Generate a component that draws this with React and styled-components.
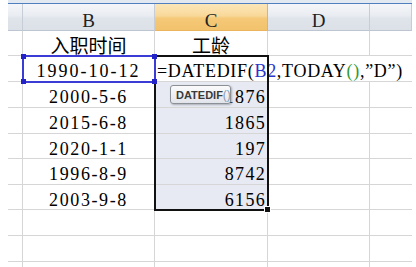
import React from 'react';
import styled, { createGlobalStyle } from 'styled-components';

const GlobalStyle = createGlobalStyle`
  html, body {
    margin: 0;
    padding: 0;
    background: #fff;
    overflow: hidden;
  }
`;

const COLS = '15px 132px 113px 102px 42px';
const GRID = '#d6d6d6';

const Sheet = styled.div`
  position: relative;
  margin-left: 8px;
  width: 404px;
  height: 267px;
  overflow: hidden;
  font-family: "Liberation Serif", "Noto Sans CJK SC", serif;
  font-size: 18px;
  color: #000;
`;

const TopStrip = styled.div`
  height: 3px;
  background: #e3e9f1;
  border-bottom: 1px solid #4f7fbf;
`;

const Row = styled.div`
  display: grid;
  grid-template-columns: ${COLS};
  height: ${p => p.h}px;
`;

const HeadCell = styled.div`
  box-sizing: border-box;
  display: flex;
  align-items: center;
  justify-content: center;
  padding-top: 6px;
  line-height: 1;
  font-size: 19px;
  color: #222;
  background: ${p => p.active
    ? 'linear-gradient(#fbe6b8, #f9d99a 45%, #f5c978 55%, #f2c26c)'
    : 'linear-gradient(#f4f6f9, #e9ecf1 45%, #dfe4eb 55%, #dce1e8)'};
  border-right: 1px solid ${p => (p.active ? '#e2b268' : '#c6cdd7')};
  border-bottom: 1px solid ${p => (p.active ? '#eab55e' : '#bcc5d1')};
`;

const Cell = styled.div`
  box-sizing: border-box;
  position: relative;
  display: flex;
  align-items: center;
  justify-content: ${p => (p.align === 'right' ? 'flex-end' : p.align === 'left' ? 'flex-start' : 'center')};
  padding-top: ${p => (p.cjk ? '2px' : '5px')};
  padding-right: ${p => (p.align === 'right' ? '1px' : '0')};
  padding-left: ${p => (p.align === 'left' ? '2px' : '0')};
  font-family: ${p => (p.cjk ? '"Noto Sans CJK SC", sans-serif' : '"Liberation Serif", serif')};
  font-size: ${p => (p.cjk ? '19px' : '18px')};
  letter-spacing: ${p => p.ls || 0}px;
  line-height: 1;
  white-space: nowrap;
  background: ${p => (p.sel ? '#e7e9f3' : p.open ? 'transparent' : '#fff')};
  border-right: ${p => (p.open ? 'none' : `1px solid ${GRID}`)};
  border-bottom: 1px solid ${GRID};
  z-index: ${p => (p.front ? 1 : 0)};
`;

const Ref = styled.span`
  color: #2a35c9;
`;

const Paren = styled.span`
  color: #2f9a35;
`;

const RefBox = styled.div`
  position: absolute;
  left: 14px;
  top: 55px;
  width: 134px;
  height: 28px;
  box-sizing: border-box;
  border: 2px solid #3b3bd6;
  z-index: 3;
`;

const Knob = styled.div`
  position: absolute;
  width: 5px;
  height: 5px;
  background: #2323c8;
  left: ${p => (p.r ? 'auto' : '-3px')};
  right: ${p => (p.r ? '-3px' : 'auto')};
  top: ${p => (p.b ? 'auto' : '-3px')};
  bottom: ${p => (p.b ? '-3px' : 'auto')};
`;

const Range = styled.div`
  position: absolute;
  left: 146px;
  top: 55px;
  width: 115px;
  height: 156px;
  box-sizing: border-box;
  border: 2px solid #111;
  z-index: 2;
`;

const Handle = styled.div`
  position: absolute;
  left: 256px;
  top: 206px;
  width: 5px;
  height: 5px;
  background: #111;
  border: 1px solid #fff;
  z-index: 4;
`;

const Tip = styled.div`
  position: absolute;
  left: 162px;
  top: 85px;
  width: 61px;
  height: 19px;
  box-sizing: border-box;
  display: flex;
  align-items: center;
  padding-left: 5px;
  overflow: hidden;
  border: 1px solid #8b8f96;
  border-radius: 3px;
  background: linear-gradient(#fbfbfc, #eceef2 60%, #e1e4ea);
  box-shadow: 1px 1px 2px rgba(0, 0, 0, 0.25);
  font-family: "Liberation Sans", Arial, sans-serif;
  font-size: 11px;
  font-weight: bold;
  color: #3a3a3a;
  white-space: nowrap;
  z-index: 5;
`;

const TipArgs = styled.span`
  font-weight: normal;
  font-size: 12px;
  color: #8a9ab4;
`;

const dates = ['2000-5-6', '2015-6-8', '2020-1-1', '1996-8-9', '2003-9-8'];
const ages = ['1876', '1865', '197', '8742', '6156'];
const heights = [26, 26, 25, 26, 25];

function Empty({ h }) {
  return (
    <Row h={h}>
      <Cell />
      <Cell />
      <Cell />
      <Cell />
      <Cell open />
    </Row>
  );
}

export default function App() {
  return (
    <>
      <GlobalStyle />
      <Sheet>
        <TopStrip />
        <Row h={27}>
          <HeadCell />
          <HeadCell>B</HeadCell>
          <HeadCell active>C</HeadCell>
          <HeadCell>D</HeadCell>
          <HeadCell />
        </Row>

        <Row h={25}>
          <Cell />
          <Cell cjk>入职时间</Cell>
          <Cell cjk>工龄</Cell>
          <Cell />
          <Cell open />
        </Row>

        <Row h={26}>
          <Cell />
          <Cell ls={2}>1990-10-12</Cell>
          <Cell align="left" ls={0.7} open front>
            =DATEDIF(<Ref>B2</Ref>,TODAY<Paren>()</Paren>,”D”)
          </Cell>
          <Cell open />
          <Cell open />
        </Row>

        {dates.map((d, i) => (
          <Row h={heights[i]} key={d}>
            <Cell />
            <Cell ls={1.6}>{d}</Cell>
            <Cell sel align="right" ls={1.3}>{ages[i]}</Cell>
            <Cell />
            <Cell open />
          </Row>
        ))}

        <Empty h={26} />
        <Empty h={26} />
        <Empty h={26} />

        <RefBox>
          <Knob />
          <Knob r />
          <Knob b />
          <Knob r b />
        </RefBox>
        <Range />
        <Handle />
        <Tip>
          DATEDIF<TipArgs>()</TipArgs>
        </Tip>
      </Sheet>
    </>
  );
}
